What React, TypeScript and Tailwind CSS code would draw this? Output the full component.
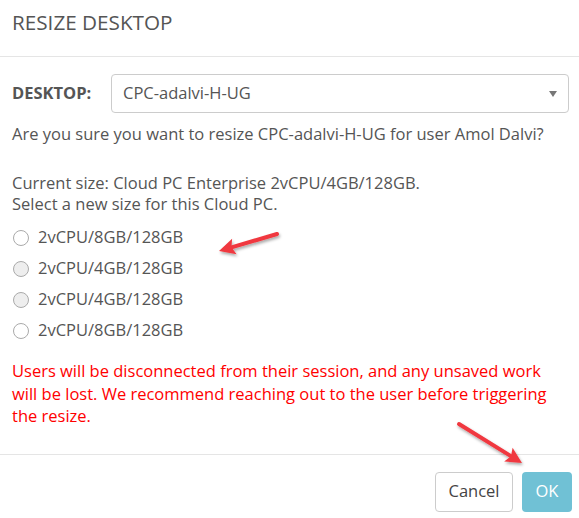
import React from "react";

const sizes = ["2vCPU/8GB/128GB", "2vCPU/4GB/128GB", "2vCPU/4GB/128GB", "2vCPU/8GB/128GB"];

function Arrow({ x1, y1, x2, y2 }: { x1: number; y1: number; x2: number; y2: number }) {
  const dx = x2 - x1;
  const dy = y2 - y1;
  const len = Math.sqrt(dx * dx + dy * dy);
  const ux = dx / len;
  const uy = dy / len;
  const hl = 16;
  const hw = 8;
  const bx = x2 - ux * hl;
  const by = y2 - uy * hl;
  const px = -uy;
  const py = ux;
  const pts = `${x2},${y2} ${bx + px * hw},${by + py * hw} ${bx + ux * 3},${by + uy * 3} ${bx - px * hw},${by - py * hw}`;
  return (
    <g>
      <line x1={x1} y1={y1} x2={bx + ux * 3} y2={by + uy * 3} stroke="#f0393f" strokeWidth={4} strokeLinecap="round" />
      <polygon points={pts} fill="#f0393f" />
    </g>
  );
}

export default function App() {
  return (
    <div className="relative w-[579px] h-[518px] bg-white text-[#555] overflow-hidden" style={{ fontFamily: '"Open Sans", sans-serif' }}>
      <div className="h-[57px] border-b border-[#e5e5e5] px-[12px] pt-[8px]">
        <div className="text-[20.7px] leading-[28px] text-[#555]">RESIZE DESKTOP</div>
      </div>
      <div className="pl-[12px] pr-[10px] pt-[17px] pb-[26px]">
        <div className="flex items-center h-[39px]">
          <div className="w-[99px] text-[16.5px] font-bold text-[#555]">DESKTOP:</div>
          <div className="flex-1 h-[39px] border border-[#ccc] rounded-[4px] flex items-center justify-between pl-[11px] pr-[11px] text-[16.5px]">
            <span>CPC-adalvi-H-UG</span>
            <svg width="8" height="6" viewBox="0 0 8 6"><polygon points="0,0 8,0 4,6" fill="#777" /></svg>
          </div>
        </div>
        <div className="mt-[10px] text-[16.5px] leading-[21px] whitespace-nowrap">Are you sure you want to resize CPC-adalvi-H-UG for user Amol Dalvi?</div>
        <div className="mt-[28px] text-[16.5px] leading-[21px]">
          <div>Current size: Cloud PC Enterprise 2vCPU/4GB/128GB.</div>
          <div>Select a new size for this Cloud PC.</div>
        </div>
        <div className="mt-[8px] flex flex-col">
          {sizes.map((s, i) => (
            <label key={i} className="h-[31px] flex items-center text-[16.5px]">
              <span
                className={
                  "w-[16px] h-[16px] rounded-full border border-[#aaa] mr-[9px] ml-[1px] " +
                  (i === 1 || i === 2 ? "bg-[#eeeeee]" : "bg-white")
                }
              />
              <span>{s}</span>
            </label>
          ))}
        </div>
        <div className="mt-[14px] pr-[2px] text-[16.5px] leading-[22.5px] text-[#ff0000]">
          Users will be disconnected from their session, and any unsaved work will be lost. We recommend reaching out to the user before triggering the resize.
        </div>
      </div>
      <div className="border-t border-[#e5e5e5] flex justify-end gap-[9px] px-[7px] pt-[17px]">
        <button className="h-[40px] w-[78px] border border-[#ccc] rounded-[4px] bg-white text-[16.5px] text-[#444]">Cancel</button>
        <button className="h-[40px] w-[50px] rounded-[4px] bg-[#70c1d5] text-[16.5px] text-white">OK</button>
      </div>
      <svg className="absolute left-0 top-0 pointer-events-none" width="579" height="518">
        <defs>
          <filter id="sh" x="-20%" y="-20%" width="140%" height="140%">
            <feDropShadow dx="1" dy="2" stdDeviation="1.5" floodColor="#000" floodOpacity="0.35" />
          </filter>
        </defs>
        <g filter="url(#sh)">
          <Arrow x1={277} y1={234} x2={219} y2={251} />
          <Arrow x1={459} y1={424} x2={522} y2={463} />
        </g>
      </svg>
    </div>
  );
}
